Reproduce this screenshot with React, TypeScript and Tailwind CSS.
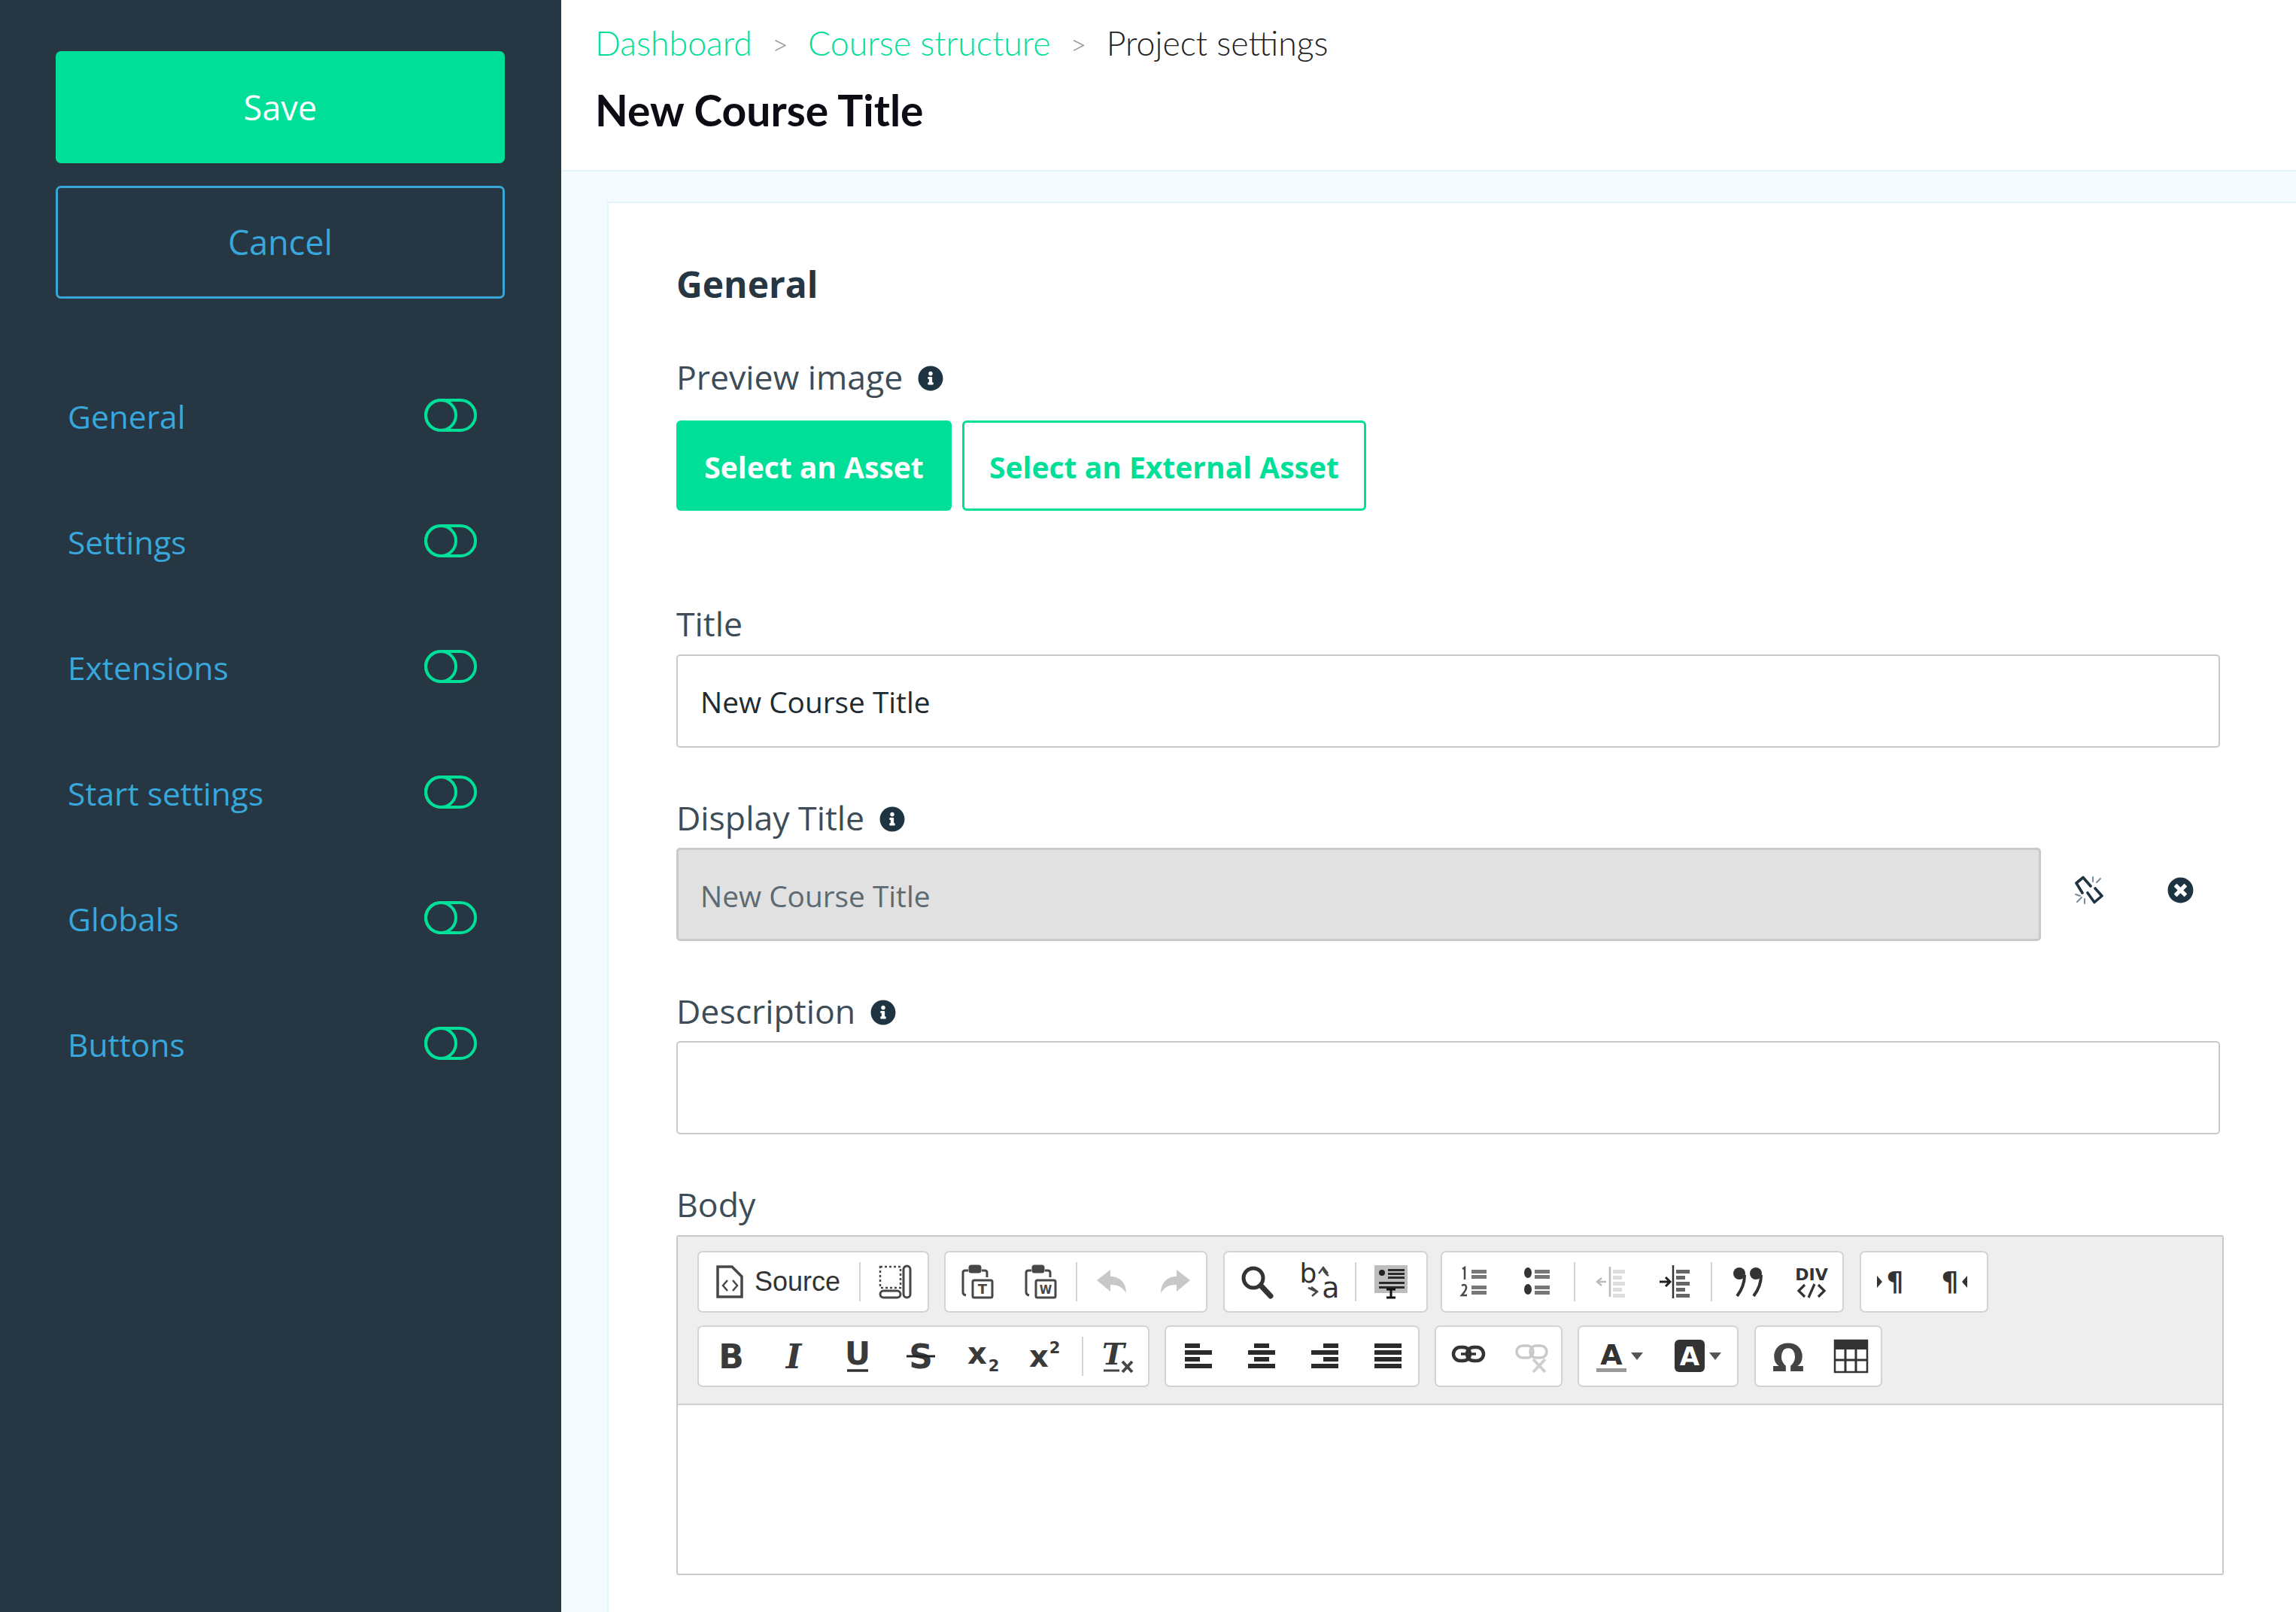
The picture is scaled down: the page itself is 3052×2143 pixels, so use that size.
import { FaInfoCircle, FaTimesCircle } from "react-icons/fa";
import type { ReactNode } from "react";

const navItems = ["General", "Settings", "Extensions", "Start settings", "Globals", "Buttons"];

const Toggle = () => (
  <svg width="70" height="44" viewBox="0 0 70 44" fill="none" stroke="#00df97" strokeWidth="4">
    <rect x="2" y="2" width="66" height="40" rx="20" />
    <circle cx="22" cy="22" r="20" />
  </svg>
);

const Icon = ({ children, width = 44 }: { children: ReactNode; width?: number }) => (
  <svg width={width} height="44" viewBox={`0 0 ${width} 44`} fill="none" stroke="#474747" strokeWidth="3" className="overflow-visible">
    {children}
  </svg>
);

const Glyph = ({ x = 22, y = 36, size = 42, children, fill = "#3a3a3a", italic = false, bold = true, serif = false }: {
  x?: number; y?: number; size?: number; children: ReactNode; fill?: string; italic?: boolean; bold?: boolean; serif?: boolean;
}) => (
  <text
    x={x}
    y={y}
    textAnchor="middle"
    fontSize={size}
    fontWeight={bold ? 700 : 400}
    fontStyle={italic ? "italic" : "normal"}
    fill={fill}
    stroke="none"
    className={serif ? "font-['DejaVu_Serif',serif]" : "font-['DejaVu_Sans',sans-serif]"}
  >
    {children}
  </text>
);

const Lines = ({ rows, x, w, h = 6, color = "#2a2a2a" }: { rows: number[]; x: number | number[]; w: number | number[]; h?: number; color?: string }) => (
  <g fill={color} stroke="none">
    {rows.map((y, i) => (
      <rect key={i} x={Array.isArray(x) ? x[i] : x} y={y} width={Array.isArray(w) ? w[i] : w} height={h} />
    ))}
  </g>
);

const Clipboard = ({ letter }: { letter: string }) => (
  <>
    <path d="M9 7 H5 Q2 7 2 10 V36 Q2 39 6 40 M27 7 H31 Q34 7 34 10 V16" />
    <rect x="11" y="1" width="14" height="8" rx="2" fill="#474747" />
    <rect x="15" y="20" width="26" height="23" rx="2" strokeWidth="3" fill="#fff" />
    <Glyph x={28} y={38} size={letter === "W" ? 15 : 18} fill="#474747">{letter}</Glyph>
  </>
);

const Undo = ({ flip = false }: { flip?: boolean }) => (
  <g transform={flip ? "translate(44 0) scale(-1 1)" : undefined}>
    <path d="M2 20 L20 6 V15 C34 15 41 25 41 37 C36 29 30 26 20 26 V35 Z" fill="#c8c8c8" stroke="none" />
  </g>
);

const Sep = ({ wide = false }: { wide?: boolean }) => (
  <span className={wide ? "w-[2px] h-[52px] mx-[6px] bg-[#d4d4d4] shrink-0" : "w-[2px] h-[52px] mx-[4px] bg-[#d4d4d4] shrink-0"} />
);

const Btn = ({ children }: { children: ReactNode }) => (
  <span className="w-[84px] h-full flex items-center justify-center shrink-0">{children}</span>
);

const Group = ({ className, children }: { className: string; children: ReactNode }) => (
  <div className={`h-[82px] flex items-center px-[1px] bg-white border-2 border-[#d3d3d3] rounded-[7px] shrink-0 ${className}`}>
    {children}
  </div>
);

const InfoIcon = () => <FaInfoCircle className="text-[#1f3442] shrink-0 mt-[2px]" size={34} />;

const BrokenLink = () => (
  <svg width="38" height="38" viewBox="0 0 38 38" fill="none" strokeLinecap="round" strokeLinejoin="round">
    <path d="M21 14 L11 2.5 L2 10 L10 23 M17 23 L26 35.5 L36 27 L27 17" stroke="#1f3442" strokeWidth="3.6" />
    <path d="M24 2 V8 M34 4 L29 9 M1 25 L7 27 M3 35 L9 29 M13 31 V37" stroke="#7d8d97" strokeWidth="2" />
  </svg>
);

const Label = ({ text, info = false, className = "" }: { text: string; info?: boolean; className?: string }) => (
  <div className={`h-[60px] flex items-center gap-[20px] text-[44.6px] leading-[56px] text-[#3d4c56] ${className}`}>
    <span className="-mt-[2px]">{text}</span>
    {info && <InfoIcon />}
  </div>
);

export default function App() {
  return (
    <div className="w-[3052px] h-[2143px] flex overflow-hidden bg-[#f4fbfe] font-['Open_Sans',sans-serif]">
      <aside className="w-[746px] shrink-0 bg-[#263743] pt-[68px] px-[74px]">
        <button className="w-[597px] h-[149px] rounded-[7px] bg-[#00df97] text-white text-[45px]">Save</button>
        <button className="w-[597px] h-[150px] mt-[30px] rounded-[7px] border-[3px] border-[#37a7d6] text-[#37a7dc] text-[45px]">
          Cancel
        </button>
        <nav className="mt-[75px]">
          {navItems.map((item) => (
            <div key={item} className="h-[167px] flex items-center justify-between pl-[16px] pr-[38px]">
              <span className="text-[42.5px] text-[#37a7dc] -mt-[3px]">{item}</span>
              <span className="-mt-[8px]"><Toggle /></span>
            </div>
          ))}
        </nav>
      </aside>

      <main className="flex-1 min-w-0 flex flex-col">
        <header className="h-[228px] shrink-0 bg-white border-b-2 border-[#e2f5fb] pl-[45px] pt-[26px] font-['Lato',sans-serif]">
          <div className="h-[64px] flex items-center text-[44.7px] font-light">
            <span className="text-[#00df97]">Dashboard</span>
            <span className="w-[74px] text-center text-[#9a9a9a] text-[38px]">&gt;</span>
            <span className="text-[#00df97]">Course structure</span>
            <span className="w-[74px] text-center text-[#9a9a9a] text-[38px]">&gt;</span>
            <span className="text-[#222]">Project settings</span>
          </div>
          <h1 className="mt-[24px] text-[57px] leading-[64px] font-bold text-[#0c0c14]">New Course Title</h1>
        </header>

        <section className="flex-1 ml-[61px] mt-[40px] bg-white border-l-2 border-t-2 border-[#e2f5fb] pt-[78px] pl-[90px]">
          <h2 className="h-[60px] flex items-center text-[48px] font-bold text-[#263743]">General</h2>

          <Label text="Preview image" info className="mt-[64px]" />
          <div className="mt-[27px] h-[120px] flex gap-[14px] text-[39px] font-bold">
            <button className="w-[366px] pt-[4px] rounded-[6px] bg-[#00df97] text-white">Select an Asset</button>
            <button className="w-[537px] pt-[4px] rounded-[6px] border-[3px] border-[#00df97] text-[#00df97]">Select an External Asset</button>
          </div>

          <Label text="Title" className="mt-[121px]" />
          <input
            readOnly
            value="New Course Title"
            className="block mt-[10px] w-[2052px] h-[124px] px-[30px] pt-[2px] rounded-[5px] border-2 border-[#c9c9c9] text-[38.8px] text-[#1f2b33] outline-none"
          />

          <Label text="Display Title" info className="mt-[64px]" />
          <div className="mt-[9px] flex items-center">
            <input
              readOnly
              value="New Course Title"
              className="block w-[1814px] h-[124px] px-[29px] pt-[3px] rounded-[5px] border-[3px] border-[#c9c9c9] bg-[#e1e1e1] text-[38.8px] text-[#5d6a73] outline-none"
            />
            <span className="ml-[45px] mb-[12px] w-[38px] flex justify-center"><BrokenLink /></span>
            <span className="ml-[84px] mb-[12px] w-[36px] flex justify-center"><FaTimesCircle className="text-[#1f3442]" size={35} /></span>
          </div>

          <Label text="Description" info className="mt-[64px]" />
          <input readOnly className="block mt-[9px] w-[2052px] h-[124px] rounded-[5px] border-2 border-[#c9c9c9] outline-none" />

          <Label text="Body" className="mt-[64px]" />
          <div className="mt-[10px] w-[2057px] h-[452px] border-2 border-[#c9c9c9] rounded-[3px] bg-white">
            <div className="h-[224px] bg-[#eeeeee] border-b-2 border-[#d1d1d1] pt-[19px] pl-[26px]">
              <div className="flex">
                <Group className="w-[308px]">
                  <span className="w-[212px] h-full flex items-center pl-[21px] gap-[14px] shrink-0">
                    <Icon width={38}>
                      <path d="M3 2 H22 L35 15 V42 H3 Z" strokeWidth="3.5" />
                      <path d="M16 20 L10 27 L16 34 M23 20 L29 27 L23 34" strokeWidth="2.5" />
                    </Icon>
                    <span className="text-[36px] text-[#333] font-['Liberation_Sans',sans-serif]">Source</span>
                  </span>
                  <span className="w-[2px] h-[52px] bg-[#d4d4d4] shrink-0" />
                  <span className="pl-[24px] flex items-center">
                    <Icon>
                      <rect x="2" y="2" width="27" height="28" strokeDasharray="3 3" strokeWidth="2.5" />
                      <rect x="33" y="1" width="9" height="42" rx="4.5" />
                      <rect x="2" y="34" width="27" height="9" rx="4.5" />
                    </Icon>
                  </span>
                </Group>

                <Group className="w-[350px] ml-[20px]">
                  <Btn><Icon><Clipboard letter="T" /></Icon></Btn>
                  <Btn><Icon><Clipboard letter="W" /></Icon></Btn>
                  <Sep />
                  <Btn><Icon><Undo /></Icon></Btn>
                  <Btn><Icon><Undo flip /></Icon></Btn>
                </Group>

                <Group className="w-[272px] ml-[21px]">
                  <Btn>
                    <Icon>
                      <circle cx="17" cy="17" r="13" strokeWidth="5" stroke="#333" />
                      <path d="M27 27 L40 41" strokeWidth="7" strokeLinecap="round" stroke="#333" />
                    </Icon>
                  </Btn>
                  <Btn>
                    <Icon>
                      <Glyph x={6} y={23} size={36} fill="#333" bold={false}>b</Glyph>
                      <Glyph x={36} y={43} size={38} fill="#333" bold={false}>a</Glyph>
                      <path d="M20 11 L26 3 L32 11 M26 5 Q27 10 33 14" strokeWidth="2.5" />
                      <path d="M6 30 L17 35 M11 41 L18 35 L10 29" strokeWidth="2.5" />
                    </Icon>
                  </Btn>
                  <Sep />
                  <Btn>
                    <Icon>
                      <rect x="0" y="0" width="44" height="37" fill="#bdbdbd" stroke="none" />
                      <circle cx="10" cy="10" r="4" fill="#222" stroke="none" />
                      <Lines rows={[5, 10, 15]} x={18} w={22} h={3} />
                      <Lines rows={[22, 28]} x={6} w={34} h={3} />
                      <path d="M22 32 V42 M16 32 H28 M16 43 H28" stroke="#111" strokeWidth="3" />
                    </Icon>
                  </Btn>
                </Group>

                <Group className="w-[536px] ml-[17px]">
                  <Btn>
                    <Icon>
                      <path d="M6 5 L9 3 V19 M5 27 Q11 24 11 30 Q11 33 5 40 H12" strokeWidth="2.5" />
                      <Lines rows={[6, 13, 27, 34]} x={18} w={20} h={5} color="#777" />
                    </Icon>
                  </Btn>
                  <Btn>
                    <Icon>
                      <ellipse cx="9" cy="10" rx="5" ry="7" fill="#333" stroke="none" />
                      <ellipse cx="9" cy="32" rx="5" ry="7" fill="#333" stroke="none" />
                      <Lines rows={[6, 13, 27, 34]} x={18} w={20} h={5} color="#777" />
                    </Icon>
                  </Btn>
                  <Sep wide />
                  <Btn>
                    <Icon>
                      <path d="M20 2 V42" stroke="#bbb" strokeWidth="2.5" />
                      <path d="M15 22 H3 M9 17 L3 22 L9 27" stroke="#bbb" strokeWidth="2.5" />
                      <Lines rows={[6, 14, 22, 30, 38]} x={24} w={[16, 12, 16, 12, 16]} h={5} color="#ddd" />
                    </Icon>
                  </Btn>
                  <Btn>
                    <Icon>
                      <path d="M20 0 V44" stroke="#333" strokeWidth="2.5" />
                      <path d="M2 22 H15 M10 16 L16 22 L10 28" stroke="#222" strokeWidth="3" />
                      <Lines rows={[6, 14, 22, 30, 38]} x={24} w={[18, 12, 18, 12, 18]} h={5} color="#666" />
                    </Icon>
                  </Btn>
                  <Sep wide />
                  <Btn>
                    <Icon>
                      <circle cx="10" cy="11" r="8" fill="#333" stroke="none" />
                      <circle cx="32" cy="11" r="8" fill="#333" stroke="none" />
                      <path d="M17 13 Q17 28 7 41 M39 13 Q39 28 29 41" strokeWidth="4" stroke="#333" />
                    </Icon>
                  </Btn>
                  <Btn>
                    <Icon>
                      <Glyph y={20} size={22} fill="#333">DIV</Glyph>
                      <path d="M13 26 L5 34 L13 42 M31 26 L39 34 L31 42 M26 25 L18 43" strokeWidth="3.2" stroke="#333" />
                    </Icon>
                  </Btn>
                </Group>

                <Group className="w-[171px] ml-[21px]">
                  <Btn>
                    <Icon>
                      <path d="M0 14 L7 22 L0 30 Z" fill="#333" stroke="none" />
                      <Glyph x={24} y={34} size={36} fill="#333">¶</Glyph>
                    </Icon>
                  </Btn>
                  <Btn>
                    <Icon>
                      <Glyph x={13} y={34} size={36} fill="#333">¶</Glyph>
                      <path d="M36 14 L29 22 L36 30 Z" fill="#333" stroke="none" />
                    </Icon>
                  </Btn>
                </Group>
              </div>

              <div className="flex mt-[17px]">
                <Group className="w-[601px]">
                  <Btn><Icon><Glyph size={44} y={38}>B</Glyph></Icon></Btn>
                  <Btn><span className="-ml-[3px] flex"><Icon><Glyph size={44} y={38} italic serif>I</Glyph></Icon></span></Btn>
                  <Btn>
                    <Icon>
                      <Glyph y={33} size={42}>U</Glyph>
                      <path d="M8 41 H36" strokeWidth="3.5" stroke="#333" />
                    </Icon>
                  </Btn>
                  <Btn>
                    <Icon>
                      <Glyph size={44} y={38}>S</Glyph>
                      <path d="M3 22 H41" strokeWidth="3" stroke="#222" />
                    </Icon>
                  </Btn>
                  <Btn>
                    <Icon>
                      <Glyph x={13} y={32} size={40}>x</Glyph>
                      <Glyph x={35} y={42} size={21}>2</Glyph>
                    </Icon>
                  </Btn>
                  <Btn>
                    <Icon>
                      <Glyph x={11} y={36} size={40}>x</Glyph>
                      <Glyph x={32} y={18} size={21}>2</Glyph>
                    </Icon>
                  </Btn>
                  <Sep />
                  <Btn>
                    <Icon>
                      <Glyph x={16} y={33} size={40} italic serif>T</Glyph>
                      <path d="M3 41 H24" strokeWidth="3" stroke="#444" />
                      <path d="M28 29 L41 43 M41 29 L28 43" strokeWidth="4" />
                    </Icon>
                  </Btn>
                </Group>

                <Group className="w-[339px] ml-[20px]">
                  <Btn><Icon><Lines rows={[5, 14, 23, 32]} x={4} w={[20, 36, 20, 36]} /></Icon></Btn>
                  <Btn><Icon><Lines rows={[5, 14, 23, 32]} x={[12, 4, 12, 4]} w={[20, 36, 20, 36]} /></Icon></Btn>
                  <Btn><Icon><Lines rows={[5, 14, 23, 32]} x={[20, 4, 20, 4]} w={[20, 36, 20, 36]} /></Icon></Btn>
                  <Btn><Icon><Lines rows={[5, 14, 23, 32]} x={4} w={36} /></Icon></Btn>
                </Group>

                <Group className="w-[170px] ml-[20px]">
                  <Btn>
                    <Icon>
                      <rect x="2" y="10" width="22" height="18" rx="9" strokeWidth="4.5" stroke="#333" />
                      <rect x="20" y="10" width="22" height="18" rx="9" strokeWidth="4.5" stroke="#333" />
                      <path d="M12 19 H32" strokeWidth="3.5" stroke="#333" />
                    </Icon>
                  </Btn>
                  <Btn>
                    <Icon>
                      <rect x="2" y="8" width="22" height="16" rx="8" strokeWidth="3.5" stroke="#c9c9c9" />
                      <rect x="20" y="8" width="22" height="16" rx="8" strokeWidth="3.5" stroke="#c9c9c9" />
                      <path d="M24 26 L40 43 M40 26 L24 43" strokeWidth="4" stroke="#cfcfcf" />
                    </Icon>
                  </Btn>
                </Group>

                <Group className="w-[214px] ml-[20px]">
                  <span className="w-[104px] flex items-center justify-center gap-[4px] shrink-0">
                    <Icon>
                      <Glyph y={33} size={38} fill="#333">A</Glyph>
                      <rect x="2" y="38" width="40" height="5" fill="#999" stroke="none" />
                    </Icon>
                    <svg width="16" height="10" viewBox="0 0 16 10"><path d="M0 0 H16 L8 10 Z" fill="#555" /></svg>
                  </span>
                  <span className="w-[104px] flex items-center justify-center gap-[4px] shrink-0">
                    <Icon>
                      <rect x="2" y="0" width="40" height="43" rx="6" fill="#333" stroke="none" />
                      <Glyph y={34} size={34} fill="#fff">A</Glyph>
                    </Icon>
                    <svg width="16" height="10" viewBox="0 0 16 10"><path d="M0 0 H16 L8 10 Z" fill="#555" /></svg>
                  </span>
                </Group>

                <Group className="w-[170px] ml-[21px]">
                  <Btn><Icon><Glyph y={41} size={50} fill="#444">Ω</Glyph></Icon></Btn>
                  <Btn>
                    <span className="-ml-[3px] flex">
                      <Icon>
                        <rect x="1" y="1" width="43" height="42" fill="#fff" stroke="#333" strokeWidth="2.5" />
                        <rect x="1" y="1" width="43" height="12" fill="#333" stroke="none" />
                        <path d="M15 13 V43 M29 13 V43 M1 27 H44" stroke="#333" strokeWidth="3" />
                      </Icon>
                    </span>
                  </Btn>
                </Group>
              </div>
            </div>
          </div>
        </section>
      </main>
    </div>
  );
}
